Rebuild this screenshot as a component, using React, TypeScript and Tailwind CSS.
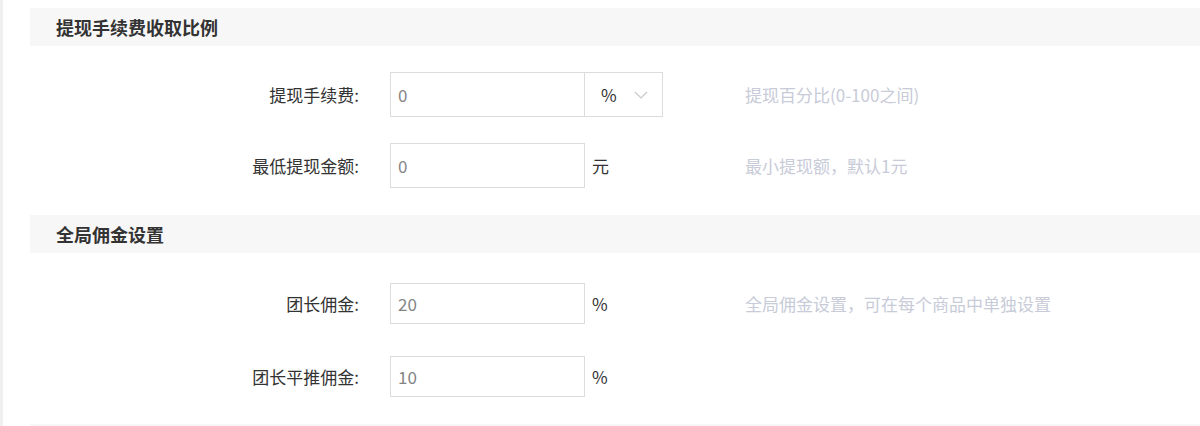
import React from "react";

const font = { fontFamily: '"Noto Sans CJK SC", "Noto Sans", sans-serif' };

function SectionTitle({ children }: { children: React.ReactNode }) {
  return (
    <div className="h-[38px] bg-[#f7f7f7] flex items-center pl-[26px] text-[18px] font-bold text-[#333]">
      {children}
    </div>
  );
}

function Row({
  label,
  value,
  unit,
  select,
  help,
  h,
}: {
  label: string;
  value: string;
  unit?: string;
  select?: boolean;
  help?: string;
  h: string;
}) {
  return (
    <div className="flex items-center">
      <div className="w-[329px] text-right text-[17px] text-[#333]">{label}</div>
      <div className="w-[355px] ml-[31px] flex items-center">
        <div className={`${h} w-[195px] border border-[#dcdcdc] bg-white flex items-center px-[7px] text-[17px] text-[#858585]`}>
          {value}
        </div>
        {select ? (
          <div className={`${h} w-[79px] -ml-px border border-[#dcdcdc] bg-white flex items-center pl-[16px] text-[17px] text-[#333]`}>
            <span>%</span>
            <svg className="ml-[17px]" width="14" height="8" viewBox="0 0 14 8" fill="none">
              <path d="M1 1l6 6 6-6" stroke="#c8c8c8" strokeWidth="1.2" />
            </svg>
          </div>
        ) : (
          <span className="ml-[7px] text-[17px] text-[#333]">{unit}</span>
        )}
      </div>
      {help && <div className="text-[17px] text-[#c8cbd8]">{help}</div>}
    </div>
  );
}

export default function App() {
  return (
    <div className="w-[1200px] h-[426px] overflow-hidden bg-white flex" style={font}>
      <div className="w-[3px] bg-[#efefef]" />
      <div className="flex-1 pl-[27px] pt-[8px]">
        <SectionTitle>提现手续费收取比例</SectionTitle>
        <div className="pt-[26px] flex flex-col gap-[26px]">
          <Row label="提现手续费:" value="0" select help="提现百分比(0-100之间)" h="h-[45px]" />
          <Row label="最低提现金额:" value="0" unit="元" help="最小提现额，默认1元" h="h-[45px]" />
        </div>
        <div className="h-[27px]" />
        <SectionTitle>全局佣金设置</SectionTitle>
        <div className="pt-[30px] flex flex-col gap-[32px]">
          <Row label="团长佣金:" value="20" unit="%" help="全局佣金设置，可在每个商品中单独设置" h="h-[41px]" />
          <Row label="团长平推佣金:" value="10" unit="%" h="h-[41px]" />
        </div>
        <div className="mt-[27px] h-[10px] bg-[#f7f7f7]" />
      </div>
    </div>
  );
}
